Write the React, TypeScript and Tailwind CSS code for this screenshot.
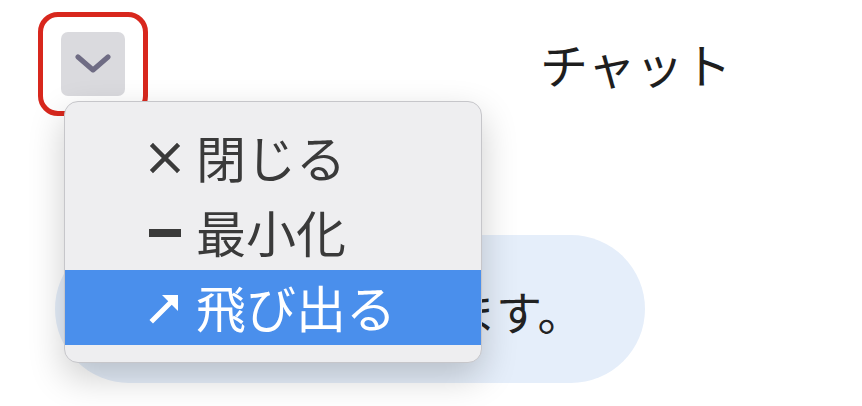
import React from 'react'

const jp = { fontFamily: '"Noto Sans CJK JP", "Noto Sans", sans-serif' }

function ChevronDown() {
  return (
    <svg width="38" height="22" viewBox="0 0 38 22" className="blur-[0.6px]">
      <path d="M4 4 L19 17 L34 4" fill="none" stroke="#6f6c84" strokeWidth="5" strokeLinecap="round" strokeLinejoin="round" />
    </svg>
  )
}

function CloseIcon() {
  return (
    <svg width="32" height="32" viewBox="0 0 32 32">
      <path d="M4 4 L28 28 M28 4 L4 28" stroke="#3a3a3a" strokeWidth="4.5" strokeLinecap="square" />
    </svg>
  )
}

function MinusIcon() {
  return (
    <svg width="34" height="32" viewBox="0 0 34 32">
      <rect x="1" y="12" width="32" height="8" fill="#3a3a3a" />
    </svg>
  )
}

function PopOutIcon() {
  return (
    <svg width="32" height="32" viewBox="0 0 32 32">
      <path d="M4 28 L25 7" stroke="#ffffff" strokeWidth="5" strokeLinecap="square" />
      <path d="M13 3 L29 3 L29 19 Z" fill="#ffffff" />
    </svg>
  )
}

const items = [
  { label: '閉じる', icon: <CloseIcon />, active: false },
  { label: '最小化', icon: <MinusIcon />, active: false },
  { label: '飛び出る', icon: <PopOutIcon />, active: true },
]

export default function App() {
  return (
    <div className="relative w-[862px] h-[406px] bg-white overflow-hidden" style={jp}>
      <div className="flex items-center pl-[38px] pt-[12px]">
        <div className="w-[110px] h-[104px] border-[5px] border-[#d8271d] rounded-[20px] flex items-center justify-center">
          <button className="w-[64px] h-[64px] rounded-[7px] bg-[#dadade] flex items-center justify-center">
            <ChevronDown />
          </button>
        </div>
        <h1 className="ml-[392px] -mt-[2px] text-[48px] leading-none text-[#1e1e1e] font-normal">チャット</h1>
      </div>

      <div className="ml-[55px] mt-[119px] w-[590px] h-[148px] rounded-full bg-[#e5eefa] flex items-center pl-[27px]">
        <p className="text-[46px] leading-none text-[#222] whitespace-nowrap mt-[2px]">ご質問をお受けします。</p>
      </div>

      <div className="absolute left-[64px] top-[101px] w-[418px] h-[262px] rounded-[14px] bg-[#eeeef0] border border-[#c6c6ca] shadow-[0_14px_36px_rgba(0,0,0,0.2)] pt-[18px] overflow-hidden">
        {items.map((item) => (
          <div
            key={item.label}
            className={`h-[75px] flex items-center pl-[83px] ${item.active ? 'bg-[#4a8fec] text-white' : 'text-[#3a3a3a]'}`}
          >
            <span className="w-[34px] flex items-center justify-center">{item.icon}</span>
            <span className="ml-[14px] -mt-[4px] text-[50px] leading-none">{item.label}</span>
          </div>
        ))}
      </div>
    </div>
  )
}
